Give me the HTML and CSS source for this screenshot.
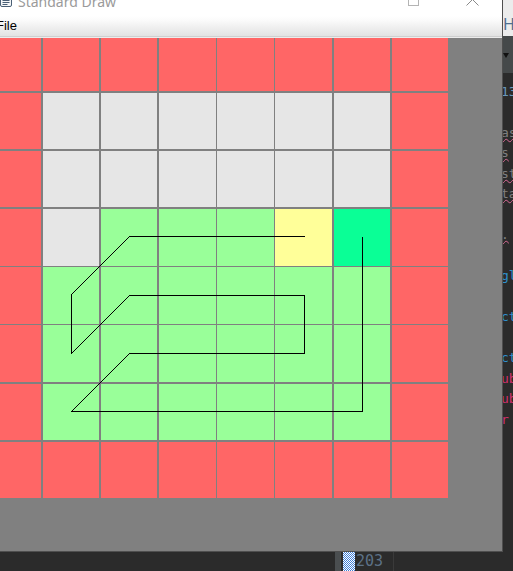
FILE: index.html
```html
<!DOCTYPE html>
<html>
<head>
<meta charset="utf-8">
<title>Standard Draw</title>
<link rel="stylesheet" href="styles.css">
</head>
<body>
<div class="desktop">
  <div class="window">
    <div class="titlebar">
      <svg class="app-icon" viewBox="0 0 13 14" width="13" height="14">
        <rect x="0.5" y="0.5" width="11" height="12" rx="1.5" fill="#f4f6f8" stroke="#4a5f75"/>
        <path d="M2.5 4.5H9.5M2.5 6.5H9.5M2.5 8.5H9.5M2.5 10.5H7.5" stroke="#4a5f75" stroke-width="1"/>
      </svg>
      <span class="title">Standard Draw</span>
      <span class="spacer"></span>
      <svg class="ctl-max" viewBox="0 0 11 11" width="11" height="11">
        <rect x="0.5" y="0.5" width="10" height="10" fill="none" stroke="#b4b4b4"/>
      </svg>
      <svg class="ctl-close" viewBox="0 0 13 13" width="13" height="13">
        <path d="M0.5 0.5L12.5 12.5M12.5 0.5L0.5 12.5" stroke="#8a8a8a" stroke-width="1"/>
      </svg>
    </div>
    <div class="menubar"><span class="menu">File</span></div>
    <div class="canvas">
      <div class="grid">
        <div class="r"></div><div class="r"></div><div class="r"></div><div class="r"></div><div class="r"></div><div class="r"></div><div class="r"></div><div class="r"></div>
        <div class="r"></div><div class="g"></div><div class="g"></div><div class="g"></div><div class="g"></div><div class="g"></div><div class="g"></div><div class="r"></div>
        <div class="r"></div><div class="g"></div><div class="g"></div><div class="g"></div><div class="g"></div><div class="g"></div><div class="g"></div><div class="r"></div>
        <div class="r"></div><div class="g"></div><div class="l"></div><div class="l"></div><div class="l"></div><div class="y"></div><div class="t"></div><div class="r"></div>
        <div class="r"></div><div class="l"></div><div class="l"></div><div class="l"></div><div class="l"></div><div class="l"></div><div class="l"></div><div class="r"></div>
        <div class="r"></div><div class="l"></div><div class="l"></div><div class="l"></div><div class="l"></div><div class="l"></div><div class="l"></div><div class="r"></div>
        <div class="r"></div><div class="l"></div><div class="l"></div><div class="l"></div><div class="l"></div><div class="l"></div><div class="l"></div><div class="r"></div>
        <div class="r"></div><div class="r"></div><div class="r"></div><div class="r"></div><div class="r"></div><div class="r"></div><div class="r"></div><div class="r"></div>
      </div>
      <svg class="trail" viewBox="0 38 502 513" width="502" height="513">
        <path d="M304.5 236.5H129.5L71.5 294.5V353.5L129.5 295.5H304.5V353.5H129.5L71.5 411.5H362.5V236.5" fill="none" stroke="#000" stroke-width="1" shape-rendering="crispEdges"/>
      </svg>
    </div>
  </div>

  <div class="side">
    <div class="side-tab"><span class="h">H</span><span class="e">e</span></div>
    <div class="side-tool"><span class="tri"></span></div>
    <div class="side-code">
      <div class="ln num">13</div>
      <div class="ln"></div>
      <div class="ln dim"><span class="typo">as</span></div>
      <div class="ln dim"><span class="typo">s</span></div>
      <div class="ln dim"><span class="typo">st</span></div>
      <div class="ln dim"><span class="typo">ta</span></div>
      <div class="ln"></div>
      <div class="ln dim"><span class="typo">. </span></div>
      <div class="ln"></div>
      <div class="ln kw">gl</div>
      <div class="ln"></div>
      <div class="ln kw">ct</div>
      <div class="ln"></div>
      <div class="ln kw">ct</div>
      <div class="ln pk">ub</div>
      <div class="ln pk">ub</div>
      <div class="ln pk">r <span class="paren">(</span></div>
    </div>
  </div>

  <div class="bottom">
    <div class="bottom-space"></div>
    <div class="gutter"></div>
    <div class="gap"></div>
    <div class="checker"></div>
    <div class="lineno">203</div>
  </div>
</div>
</body>
</html>
```
FILE: styles.css
```css
* { box-sizing: border-box; }
html, body { margin: 0; padding: 0; }
body {
  width: 513px;
  height: 571px;
  overflow: hidden;
  background: #2b2b2b;
  font-family: "Noto Sans", sans-serif;
}
.desktop {
  display: grid;
  grid-template-columns: 503px 10px;
  grid-template-rows: 552px 19px;
  width: 513px;
  height: 571px;
}

/* window */
.window {
  grid-column: 1;
  grid-row: 1;
  display: flex;
  flex-direction: column;
  background: #fff;
  border-right: 1px solid #4f4f4f;
  border-bottom: 1px solid #4f4f4f;
  overflow: hidden;
}
.titlebar {
  height: 16px;
  flex: none;
  display: flex;
  align-items: flex-start;
  background: #fff;
  overflow: hidden;
}
.app-icon { flex: none; margin-top: -6px; }
.title {
  margin-left: 5px;
  margin-top: -6px;
  font-size: 14px;
  line-height: 16px;
  color: #9a9a9a;
  white-space: nowrap;
}
.spacer { flex: 1; }
.ctl-max { flex: none; margin-top: -5px; margin-right: 47px; }
.ctl-close { flex: none; margin-top: -7px; margin-right: 23px; }

.menubar {
  height: 21px;
  flex: none;
  display: flex;
  align-items: center;
  background: linear-gradient(#ffffff 0%, #fbfbfb 20%, #e2e2e2 100%);
  border-bottom: 1px solid #cfcfcf;
}
.menu {
  margin-left: -4px;
  font-family: "Liberation Sans", Arial, sans-serif;
  font-size: 13px;
  line-height: 20px;
  color: #000;
}

.canvas {
  position: relative;
  flex: 1;
  background: #808080;
  border-top: 1px solid #ececec;
  overflow: hidden;
}
.grid {
  display: grid;
  grid-template-columns: 41px repeat(7, 56.6px);
  grid-template-rows: 53px repeat(7, 56.6px);
  gap: 1.6px;
}
.r { background: #ff6666; }
.g { background: #e6e6e6; }
.l { background: #99ff99; }
.y { background: #ffff99; }
.t { background: #0aff96; }
.trail {
  position: absolute;
  left: 0;
  top: 0;
}

/* background editor strip on the right */
.side {
  grid-column: 2;
  grid-row: 1 / span 2;
  display: flex;
  flex-direction: column;
  background: #2b2b2b;
  overflow: hidden;
}
.side-tab {
  height: 36px;
  flex: none;
  background: #ececec;
  padding-top: 16px;
  font-size: 16px;
  line-height: 16px;
  white-space: nowrap;
}
.side-tab .h { color: #4f6f90; }
.side-tab .e { color: #b9814e; }
.side-tool {
  height: 37px;
  flex: none;
  background: #45494a;
  padding-top: 17px;
  display: flex;
  align-items: flex-start;
}
.tri {
  width: 0;
  height: 0;
  border-top: 5px solid #111;
  border-left: 3px solid transparent;
  border-right: 3px solid transparent;
}
.side-code {
  padding-top: 8.75px;
  margin-left: -2px;
  font-family: "DejaVu Sans Mono", monospace;
  font-size: 13px;
  line-height: 20.5px;
  white-space: nowrap;
}
.ln { height: 20.5px; }
.num { color: #6897bb; }
.dim { color: #7f7f7f; }
.typo {
  text-decoration: underline wavy #d86a96;
  text-decoration-thickness: 1px;
}
.kw { color: #2f8fcd; }
.pk { color: #d0306c; }
.paren { color: #a9c7e4; }

/* bottom strip */
.bottom {
  grid-column: 1;
  grid-row: 2;
  display: flex;
  background: #2b2b2b;
}
.bottom-space { width: 335px; flex: none; }
.gutter { width: 6px; flex: none; background: #4a4e50; }
.gap { width: 2px; flex: none; }
.checker {
  width: 12px;
  flex: none;
  background: repeating-conic-gradient(#3f7fd8 0 25%, #ffffff 0 50%) 0 0 / 2px 2px;
}
.lineno {
  width: 39px;
  flex: none;
  padding-left: 1px;
  border-right: 1px solid #3a3a3a;
  font-family: "DejaVu Sans Mono", monospace;
  font-size: 15px;
  line-height: 19px;
  color: #5c7186;
}
```
